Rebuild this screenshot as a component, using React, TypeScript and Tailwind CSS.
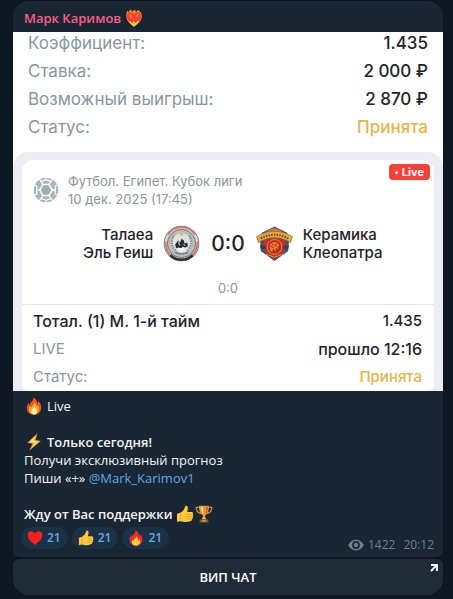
import type { ReactNode } from "react";

type IconProps = { className?: string };

function BurningHeart({ className }: IconProps) {
  return (
    <svg viewBox="0 0 18 18" className={className} aria-hidden="true">
      <path d="M9 17.800C5 15 1.200 11.500 1.200 7c0-2.600.6-4.200 1.600-5.600 0 1 .3 1.500.9 1.700C4.300 1.700 5.200.9 6.200.3c0 1.200.4 1.900 1.100 2.400C8 1.700 9 1 10.200.4c-.1 1.300.3 2 1 2.600.8-.6 1.200-1.300 1.400-2.300 2.700 1.400 4.400 3.500 4.300 6.500 0 4.300-3.900 7.800-7.900 10.600z" fill="#f48a2a" />
      <path d="M9 16C5 13.300 1.800 10.600 1.800 7.200c0-2.300 1.500-3.900 3.500-3.900 1.600 0 2.900.8 3.700 2.300.8-1.500 2.100-2.300 3.700-2.300 2 0 3.500 1.600 3.500 3.900 0 3.400-3.200 6.100-7.200 8.800z" fill="#f4402f" />
      <path d="M5.200 5.500c.2 1.200 1 1.600.8 2.900M12.800 5.300c-.2 1-.9 1.400-.8 2.400" fill="none" stroke="#ff9a6b" strokeWidth="1.100" strokeLinecap="round" />
      <path d="M9 17.600c-2.400-1.700-4.300-3.300-5.700-5.100 1 .3 1.700.2 2.300-.2.300 1 .9 1.500 1.800 1.700.2-1 .7-1.700 1.600-2.300.2 1 .7 1.600 1.600 2 .8-.3 1.300-.9 1.600-1.800.7.500 1.500.5 2.400.2-1.500 2-3.300 3.800-5.600 5.500z" fill="#ffc83d" />
    </svg>
  );
}

function Fire({ className }: IconProps) {
  return (
    <svg viewBox="0 0 18 18" className={className} aria-hidden="true">
      <path d="M8.300.4c2.600 1.300 4 3.500 4 6 .8-.6 1.100-1.600 1-2.600 1.700 1.800 3 4 2.900 7.100C16 15 13 17.700 9 17.700S1.800 15 1.800 11c0-2.400 1-4.200 2-5.600.1 1.300.4 2 1 2.600C5.200 4.400 8.900 3.700 8.300.4z" fill="#f4511e" />
      <path d="M9.600 5c1 1.800 2 2.800 2.400 4.800.6-.4.900-.9 1-1.500 1 1.300 1.400 2.600 1.200 4.100-.4 2.900-2.500 4.900-5.200 4.900s-5.200-2-5.200-4.900c0-1.400.5-2.600 1.200-3.700.2.900.6 1.400 1.200 1.800C6.700 8 9.700 7.500 9.600 5z" fill="#ffa726" />
      <path d="M9.400 9.500c.4 1.500 2.700 2.700 2.700 4.900 0 1.900-1.300 3-3 3s-3-1.100-3-2.900c0-2 1.900-2.800 3.300-5z" fill="#fff0a3" />
    </svg>
  );
}

function FlatFire({ className }: IconProps) {
  return (
    <svg viewBox="0 0 18 18" className={className} aria-hidden="true">
      <path d="M8.300.4c2.800 1.500 4 3.800 4 6.300.8-.6 1.100-1.300 1-2.300 1.700 1.800 3 3.600 2.900 6.500C16 15 13 17.700 9 17.700S1.800 15 1.800 11c0-2.400 1-4.200 2-5.600.1 1.300.4 2 1 2.600C5.200 4.400 8.900 3.700 8.300.4z" fill="#ef2f24" />
      <path d="M9.500 7c.2 1.800 2.300 2.600 2.500 4.700.6-.3.900-.7 1-1.200.8 1.200 1 2 .8 3.100-.4 2.400-2.200 4.100-4.700 4.100-2.700 0-4.800-1.600-4.800-4.200 0-1.200.4-2.100 1-2.900.2.700.5 1 1 1.300C6.700 10 9.300 9.400 9.500 7z" fill="#ffcb3d" />
    </svg>
  );
}

function Bolt({ className }: IconProps) {
  return (
    <svg viewBox="0 0 18 18" className={className} aria-hidden="true">
      <path d="M12.500.2L2.200 9.800l5.300 1L4.200 17.800 15.800 8l-5.300-1z" fill="#f59b23" />
      <path d="M11 2.600L4.300 9.200l5 .8-2.600 4.800 6.900-6.200-5-.9z" fill="#ffe082" />
    </svg>
  );
}

function ThumbUp({ className }: IconProps) {
  return (
    <svg viewBox="0 0 18 18" className={className} aria-hidden="true">
      <path d="M9.500.7c1.600-.3 2.600.8 2.300 2.700L11.200 7h4.300c1.600 0 2.100 1.600 1.200 2.400.9.600.8 1.900-.1 2.300.6.800.3 1.900-.6 2.200.4 1-.2 1.900-1.300 2-2.600.8-6.200 1.700-9.300.7l-.9-.4L1 16.800V8.700l3.300-.9C6.800 6.500 8.500 4.300 9.500.7z" fill="#ffc83d" />
      <path d="M11 9.400h5.600M11 11.800h5.500M11 14h5M5 8.700c-.8 2-.8 5 0 7.200" fill="none" stroke="#e29a26" strokeWidth=".7" strokeLinecap="round" />
    </svg>
  );
}

function Trophy({ className }: IconProps) {
  return (
    <svg viewBox="0 0 18 18" className={className} aria-hidden="true">
      <path d="M4.500 2.300H1.200c0 3.400 1.600 5.600 5 6.300M13.500 2.300h3.300c0 3.400-1.600 5.600-5 6.300" fill="none" stroke="#d98b27" strokeWidth="1.300" />
      <path d="M4 .8h10c.1 4.700-1 8.100-3.800 9.500V14H7.800v-3.700C5 8.900 3.900 5.500 4 .8z" fill="#e8962e" />
      <path d="M6 1.800h2c-.1 3 .2 5 .8 7C6.800 8 6 5.500 6 1.800z" fill="#ffe0a0" />
      <path d="M11.500 1.800H13c0 3-.8 5.600-2.500 6.800.8-2 1-4 1-6.800z" fill="#b9671a" />
      <path d="M7.500 12.500h3l.9 2h-4.800z" fill="#f2b14d" />
      <path d="M5 14.500h8l.7 3H4.300z" fill="#8a5a3b" />
      <path d="M7 15.200h4v1.300H7z" fill="#e5a84b" />
    </svg>
  );
}

function Heart({ className }: IconProps) {
  return (
    <svg viewBox="0 0 18 18" className={className} aria-hidden="true">
      <path d="M9 16.800C5 13.500.8 10.300.8 5.900.8 3.100 2.600 1.400 4.900 1.400 6.800 1.400 8.300 2.500 9 4.300c.7-1.800 2.200-2.900 4.100-2.900 2.300 0 4.100 1.700 4.100 4.500 0 4.400-4.200 7.600-8.200 10.900z" fill="#f8201d" />
    </svg>
  );
}

function Eye({ className }: IconProps) {
  return (
    <svg viewBox="0 0 16 12" className={className} aria-hidden="true">
      <path d="M8 .5c3.500 0 6.300 2.300 7.800 5.500C14.300 9.200 11.500 11.500 8 11.500S1.700 9.200.2 6C1.700 2.800 4.500.5 8 .5z" fill="currentColor" />
      <circle cx="8" cy="6" r="3.900" fill="#192633" />
      <circle cx="8" cy="6" r="2.200" fill="currentColor" />
    </svg>
  );
}

function Football({ className }: IconProps) {
  return (
    <svg viewBox="0 0 26 26" className={className} aria-hidden="true">
      <circle cx="13" cy="13" r="12.300" fill="#a9b6ba" />
      <path d="M10 7.500h6l3.300 5.500L16 18.500h-6L6.700 13z" fill="#9eadb2" stroke="#fff" strokeWidth="1.500" />
      <path d="M16 7.500l2-3.300M19.300 13h3M16 18.500l2 3.300M10 18.500l-2 3.300M6.700 13h-3M10 7.500L8 4.200" stroke="#fff" strokeWidth="1.300" />
      <path d="M13 0v2.800L8 4.300 6 2M13 2.800l5 1.500L20 2M25 8l-2.700.8v8.400l2.700.8M1 8l2.700.8v8.400L1 18M13 26v-2.800l-5-1.500L6 24M13 23.200l5-1.500 2 2.300" fill="none" stroke="#fff" strokeWidth="1.100" />
    </svg>
  );
}

function TalaeaCrest({ className }: IconProps) {
  return (
    <svg viewBox="0 0 38 38" className={className} role="img" aria-label="Талаеа Эль Геиш">
      <circle cx="19" cy="19" r="18.300" fill="#777" />
      <circle cx="19" cy="19" r="17.400" fill="#ddd9d3" />
      <path d="M5 10a16.500 16.500 0 0 1 28 0M3 17a16.500 16.500 0 0 0 7 15.500M35 17a16.500 16.500 0 0 1-7 15.500" fill="none" stroke="#e0705a" strokeWidth="1.600" />
      <path d="M7.500 31a16.500 16.500 0 0 0 23 0" fill="none" stroke="#343434" strokeWidth="2.800" />
      <circle cx="19" cy="19" r="14.500" fill="#b9bcbe" stroke="#707477" strokeWidth="1" />
      <circle cx="19" cy="19" r="10.500" fill="#dfe1e1" />
      <path d="M11 11c-3 5-2.500 12 3 16M27 11c3 5 2.500 12-3 16" fill="none" stroke="#85898b" strokeWidth="2" strokeDasharray="1.500 1" />
      <path d="M12.500 20l3-4 2 2 1.500-4 2.500 2 .5 3 3-1 .5 4-3 1-2-1-2 2-3-1-2 1z" fill="#292d30" />
      <path d="M16 17l1 4M21 20l2 1" stroke="#fff" strokeWidth=".9" />
      <path d="M14 24.500l5-1 5 1-5 3z" fill="#f7f7f7" />
      <path d="M12 28q7 3 14 0" fill="none" stroke="#7a7f82" strokeWidth="1.500" />
      <path d="M17 8h4l-1 3h-2z" fill="#dfb64d" />
    </svg>
  );
}

function CleopatraCrest({ className }: IconProps) {
  return (
    <svg viewBox="0 0 38 38" className={className} role="img" aria-label="Керамика Клеопатра">
      <path d="M14 4l5-2.500L24 4l8 4 2 6-1 13-6 4-8 6-8-6-6-4-1-13 2-6z" fill="#4b5363" />
      <path d="M14 5l5-2 5 2 6 4v17l-5 4-6 5-6-5-5-4V9z" fill="#c82f25" />
      <path d="M19 3l5 2 6 4v3H8V9l6-4z" fill="#d77a38" />
      <path d="M.5 12C12 4.500 26 4.500 37.500 12L35.500 18C25 11.500 13 11.500 2.500 18z" fill="#e3a93f" stroke="#6b5a3c" strokeWidth=".6" />
      <path d="M5 13.800C14 8.800 24 8.800 33 13.800" fill="none" stroke="#5a4528" strokeWidth="2.200" strokeDasharray="1.400 1.400" />
      <path d="M4 21h6v4H5zM28 21h6l-1 4h-5z" fill="#2d4564" />
      <circle cx="19" cy="22.500" r="7.500" fill="#bf241e" stroke="#e29b3d" strokeWidth="1" />
      <path d="M14.500 26c-1.500-5 .5-8.500 4.500-8.500 3 0 4.500 2 5 5l-2-1.500 1 4.500-2.500-2.500-.5 5-2-4-1.500 4z" fill="#ee7d33" />
      <path d="M16 19l3 2M15 22l3 1M21 19l-1 3" stroke="#a8211c" strokeWidth="1" />
      <path d="M10 30l9 3 9-3" fill="none" stroke="#df9740" strokeWidth="1" />
    </svg>
  );
}

function SummaryRow({ label, children, accent }: { label: string; children: ReactNode; accent?: boolean }) {
  return (
    <div className="flex justify-between">
      <dt className="text-[#87979e]">{label}</dt>
      <dd className={accent ? "font-medium text-[#e8b544]" : "font-medium text-[#202529]"}>{children}</dd>
    </div>
  );
}

function Reaction({ icon, label }: { icon: ReactNode; label: string }) {
  return (
    <button
      type="button"
      aria-label={label}
      className="flex h-[22px] items-center gap-1 rounded-full bg-[#1b3145] pr-[7px] pl-[6px] text-[12px] font-semibold text-[#68a9e3]"
    >
      {icon}
      21
    </button>
  );
}

export default function App() {
  return (
    <main className="min-h-screen bg-[#0e1621] pt-px pr-[10px] pb-[3px] pl-[13px] font-['Open_Sans',sans-serif] text-[13px] leading-[18px] text-[#f5f5f5]">
      <article className="overflow-hidden rounded-t-2xl rounded-b-md bg-[#192633]">
        <header className="flex h-[31px] items-center gap-1 px-[11px] pt-[3px]">
          <span className="font-semibold text-[#fb5c85]">Марк Каримов</span>
          <BurningHeart className="size-[18px]" />
        </header>

        <section className="bg-white font-['Inter',sans-serif]">
          <dl className="space-y-[6px] pr-[15px] pb-[14px] pl-[15px] text-[17px] leading-[22px]">
            <SummaryRow label="Коэффициент:">1.435</SummaryRow>
            <SummaryRow label="Ставка:">2 000 ₽</SummaryRow>
            <SummaryRow label="Возможный выигрыш:">2 870 ₽</SummaryRow>
            <SummaryRow label="Статус:" accent>Принята</SummaryRow>
          </dl>

          <div className="rounded-t-2xl bg-[#ebedf3] px-[9px] pt-2">
            <div className="relative rounded-t-xl rounded-b-md bg-white pt-3">
              <span className="absolute top-1 right-1 flex h-4 items-center gap-1 rounded-[4px] bg-[#fb3f34] px-[6px] text-[11px] font-bold text-white">
                <span className="size-[3px] rounded-full bg-white" />
                Live
              </span>
              <div className="flex items-center gap-[9px] px-[11px] text-[13px] leading-[18px] text-[#87979e]">
                <Football className="size-[26px]" />
                <p>
                  Футбол. Египет. Кубок лиги
                  <br />
                  10 дек. 2025 (17:45)
                </p>
              </div>

              <div className="mt-[17px] grid grid-cols-[1fr_auto_1fr] items-center gap-[11px] text-[15px] leading-[18px] font-medium text-[#202529]">
                <div className="flex items-center justify-end gap-[10px] text-right">
                  <p>
                    Талаеа
                    <br />
                    Эль Геиш
                  </p>
                  <TalaeaCrest className="size-[37px]" />
                </div>
                <strong className="text-[21px] leading-6 font-medium">0:0</strong>
                <div className="flex items-center gap-[10px]">
                  <CleopatraCrest className="size-[37px]" />
                  <p>
                    Керамика
                    <br />
                    Клеопатра
                  </p>
                </div>
              </div>
              <p className="mt-[17px] text-center text-[13px] leading-[18px] text-[#87979e]">0:0</p>

              <dl className="mt-[7px] space-y-2 border-t border-[#e4e6e9] pt-[6px] pr-3 pb-1 pl-[11px] text-[15px] leading-5">
                <div className="flex justify-between font-medium text-[#202529]">
                  <dt className="text-base leading-5">Тотал. (1) М. 1-й тайм</dt>
                  <dd>1.435</dd>
                </div>
                <div className="flex justify-between">
                  <dt className="text-[#87979e]">LIVE</dt>
                  <dd className="text-base leading-5 font-medium text-[#202529]">прошло 12:16</dd>
                </div>
                <SummaryRow label="Статус:" accent>Принята</SummaryRow>
              </dl>
            </div>
          </div>
        </section>

        <section className="px-[11px] pt-[6px]">
          <p className="flex items-center gap-1 pl-px">
            <Fire className="size-[18px]" />
            Live
          </p>
          <p className="mt-[18px] flex items-center gap-1 pl-px font-semibold">
            <Bolt className="size-[18px]" />
            Только сегодня!
          </p>
          <p>Получи эксклюзивный прогноз</p>
          <p>
            Пиши «+»{" "}
            <a href="#Mark_Karimov1" className="text-[#62a8e5]">
              @Mark_Karimov1
            </a>
          </p>
          <p className="mt-[18px] flex items-center font-semibold">
            <span className="mr-1">Жду от Вас поддержки</span>
            <ThumbUp className="size-[18px]" />
            <Trophy className="ml-px size-[18px]" />
          </p>
        </section>

        <footer className="flex items-end justify-between pt-1 pr-[9px] pb-1 pl-2">
          <div className="flex gap-1 pb-1">
            <Reaction label="Сердце: 21" icon={<Heart className="size-4" />} />
            <Reaction label="Нравится: 21" icon={<ThumbUp className="size-4" />} />
            <Reaction label="Огонь: 21" icon={<FlatFire className="size-4" />} />
          </div>
          <div className="flex items-center text-[12px] leading-4 text-[#6c7f94]">
            <Eye className="mr-1 h-3 w-4" />
            <span>1422</span>
            <time className="ml-2">20:12</time>
          </div>
        </footer>
      </article>

      <button
        type="button"
        className="relative mt-[2px] flex h-9 w-full items-center justify-center rounded-t-md rounded-b-2xl bg-[#1f2c38] text-[13px] font-semibold text-white"
      >
        ВИП ЧАТ
        <svg viewBox="0 0 8 8" className="absolute top-[5px] right-[5px] size-2" aria-hidden="true">
          <path d="M1 1H7v6M7 1L1 7" fill="none" stroke="#fff" strokeWidth="1.800" />
        </svg>
      </button>
    </main>
  );
}
